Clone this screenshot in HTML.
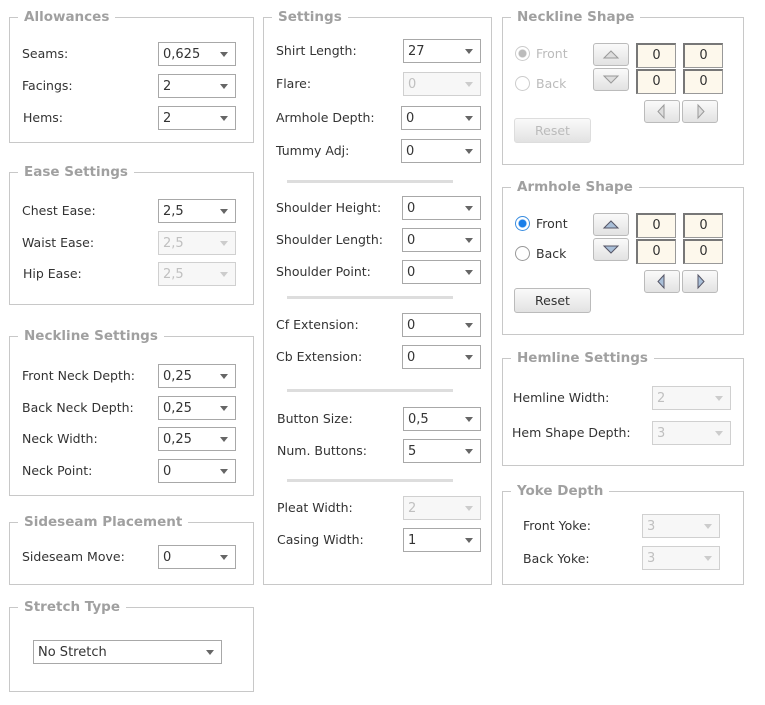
<!DOCTYPE html><html><head><style>
body{margin:0;width:765px;height:705px;background:#fff;font-family:"DejaVu Sans",Verdana,sans-serif;font-size:12.5px;color:#333;position:relative;overflow:hidden}
div,span{position:absolute;box-sizing:border-box}
.b{border:1px solid #c8c8c8}
.lg{top:-10px;left:8px;background:#fff;padding:0 6px;color:#a0a0a0;font-weight:bold;font-size:13.5px;line-height:18px;white-space:nowrap}
.l{white-space:nowrap;line-height:16px}
.s{border:1px solid #a8a8a8;height:24px;line-height:22px;padding-left:4px;padding-top:1px;background:#fff;font-size:13px}
.s:after{content:"";position:absolute;right:7px;top:9px;border-left:4px solid transparent;border-right:4px solid transparent;border-top:5px solid #666}
.d{border-color:#d0d0d0;color:#c0c0c0;background:#f7f7f7}
.d:after{border-top-color:#ccc}
.sep{height:3px;background:#ddd;left:287px;width:166px}
.btn{border:1px solid #bbb;border-radius:3px;background:linear-gradient(#fafafa,#e2e2e2)}
.inp{border:1px solid #999;border-top:2px solid #777;border-left:2px solid #777;background:#fdf8ec;text-align:center;line-height:21px;font-size:13px}
.r{width:15px;height:15px;border-radius:50%;border:1px solid #999;background:#fff}
</style></head><body>

<div class="b" style="left:9px;top:17px;width:245px;height:126px"><span class="lg">Allowances</span></div>
<div class="l" style="left:22px;top:46px">Seams:</div><div class="s" style="left:158px;top:42px;width:78px">0,625</div>
<div class="l" style="left:22px;top:78px">Facings:</div><div class="s" style="left:158px;top:74px;width:78px">2</div>
<div class="l" style="left:23px;top:110px">Hems:</div><div class="s" style="left:158px;top:106px;width:78px">2</div>

<div class="b" style="left:9px;top:172px;width:245px;height:133px"><span class="lg">Ease Settings</span></div>
<div class="l" style="left:22px;top:203px">Chest Ease:</div><div class="s" style="left:158px;top:199px;width:78px">2,5</div>
<div class="l" style="left:22px;top:235px">Waist Ease:</div><div class="s d" style="left:158px;top:231px;width:78px">2,5</div>
<div class="l" style="left:23px;top:266px">Hip Ease:</div><div class="s d" style="left:158px;top:262px;width:78px">2,5</div>

<div class="b" style="left:9px;top:336px;width:245px;height:160px"><span class="lg">Neckline Settings</span></div>
<div class="l" style="left:22px;top:368px">Front Neck Depth:</div><div class="s" style="left:158px;top:364px;width:78px">0,25</div>
<div class="l" style="left:22px;top:400px">Back Neck Depth:</div><div class="s" style="left:158px;top:396px;width:78px">0,25</div>
<div class="l" style="left:22px;top:431px">Neck Width:</div><div class="s" style="left:158px;top:427px;width:78px">0,25</div>
<div class="l" style="left:22px;top:463px">Neck Point:</div><div class="s" style="left:158px;top:459px;width:78px">0</div>

<div class="b" style="left:9px;top:522px;width:245px;height:63px"><span class="lg">Sideseam Placement</span></div>
<div class="l" style="left:22px;top:549px">Sideseam Move:</div><div class="s" style="left:158px;top:545px;width:78px">0</div>

<div class="b" style="left:9px;top:607px;width:245px;height:85px"><span class="lg">Stretch Type</span></div>
<div class="s" style="left:33px;top:640px;width:189px">No Stretch</div>

<div class="b" style="left:263px;top:17px;width:229px;height:568px"><span class="lg">Settings</span></div>
<div class="l" style="left:276px;top:43px">Shirt Length:</div><div class="s" style="left:403px;top:39px;width:78px">27</div>
<div class="l" style="left:276px;top:76px">Flare:</div><div class="s d" style="left:403px;top:72px;width:78px">0</div>
<div class="l" style="left:276px;top:110px">Armhole Depth:</div><div class="s" style="left:401px;top:106px;width:80px">0</div>
<div class="l" style="left:276px;top:143px">Tummy Adj:</div><div class="s" style="left:401px;top:139px;width:80px">0</div>
<div class="sep" style="top:180px"></div>
<div class="l" style="left:276px;top:200px">Shoulder Height:</div><div class="s" style="left:402px;top:196px;width:79px">0</div>
<div class="l" style="left:276px;top:232px">Shoulder Length:</div><div class="s" style="left:402px;top:228px;width:79px">0</div>
<div class="l" style="left:276px;top:264px">Shoulder Point:</div><div class="s" style="left:402px;top:260px;width:79px">0</div>
<div class="sep" style="top:296px"></div>
<div class="l" style="left:276px;top:317px">Cf Extension:</div><div class="s" style="left:402px;top:313px;width:79px">0</div>
<div class="l" style="left:276px;top:349px">Cb Extension:</div><div class="s" style="left:402px;top:345px;width:79px">0</div>
<div class="sep" style="top:389px"></div>
<div class="l" style="left:277px;top:411px">Button Size:</div><div class="s" style="left:403px;top:407px;width:78px">0,5</div>
<div class="l" style="left:277px;top:443px">Num. Buttons:</div><div class="s" style="left:403px;top:439px;width:78px">5</div>
<div class="sep" style="top:479px"></div>
<div class="l" style="left:277px;top:500px">Pleat Width:</div><div class="s d" style="left:403px;top:496px;width:78px">2</div>
<div class="l" style="left:277px;top:532px">Casing Width:</div><div class="s" style="left:403px;top:528px;width:78px">1</div>

<div class="b" style="left:502px;top:17px;width:242px;height:148px"><span class="lg">Neckline Shape</span></div>
<div class="r" style="left:515px;top:46px;border-color:#ccc;background:radial-gradient(#bbb 3.5px,#fff 4.5px)"></div><div class="l" style="left:536px;top:46px;color:#bbb">Front</div>
<div class="r" style="left:515px;top:76px;border-color:#ccc"></div><div class="l" style="left:536px;top:76px;color:#bbb">Back</div>
<div class="btn" style="left:593px;top:43px;width:36px;height:23px"><svg width="34" height="21"><path d="M10 14 L17 7 L24 14 Z" fill="#ddd" stroke="#999"/></svg></div>
<div class="btn" style="left:593px;top:68px;width:36px;height:23px"><svg width="34" height="21"><path d="M10 7 L17 14 L24 7 Z" fill="#ddd" stroke="#999"/></svg></div>
<div class="inp" style="left:636px;top:43px;width:40px;height:25px">0</div><div class="inp" style="left:683px;top:43px;width:40px;height:25px">0</div>
<div class="inp" style="left:636px;top:69px;width:40px;height:25px">0</div><div class="inp" style="left:683px;top:69px;width:40px;height:25px">0</div>
<div class="btn" style="left:644px;top:100px;width:36px;height:23px"><svg width="34" height="21"><path d="M19 4 L13 10.5 L19 17 Z" fill="#ddd" stroke="#999"/></svg></div>
<div class="btn" style="left:682px;top:100px;width:36px;height:23px"><svg width="34" height="21"><path d="M15 4 L21 10.5 L15 17 Z" fill="#ddd" stroke="#999"/></svg></div>
<div class="btn" style="left:514px;top:118px;width:77px;height:25px;text-align:center;line-height:23px;color:#bbb;border-color:#ddd">Reset</div>

<div class="b" style="left:502px;top:187px;width:242px;height:148px"><span class="lg">Armhole Shape</span></div>
<div class="r" style="left:515px;top:216px;border-color:#3a8de0;background:radial-gradient(#1a7ee8 3.5px,#fff 4.5px)"></div><div class="l" style="left:536px;top:216px">Front</div>
<div class="r" style="left:515px;top:246px"></div><div class="l" style="left:536px;top:246px">Back</div>
<div class="btn" style="left:593px;top:213px;width:36px;height:23px"><svg width="34" height="21"><path d="M10 14 L17 7 L24 14 Z" fill="#a9bfd8" stroke="#556"/></svg></div>
<div class="btn" style="left:593px;top:238px;width:36px;height:23px"><svg width="34" height="21"><path d="M10 7 L17 14 L24 7 Z" fill="#a9bfd8" stroke="#556"/></svg></div>
<div class="inp" style="left:636px;top:213px;width:40px;height:25px">0</div><div class="inp" style="left:683px;top:213px;width:40px;height:25px">0</div>
<div class="inp" style="left:636px;top:239px;width:40px;height:25px">0</div><div class="inp" style="left:683px;top:239px;width:40px;height:25px">0</div>
<div class="btn" style="left:644px;top:270px;width:36px;height:23px"><svg width="34" height="21"><path d="M19 4 L13 10.5 L19 17 Z" fill="#a9bfd8" stroke="#556"/></svg></div>
<div class="btn" style="left:682px;top:270px;width:36px;height:23px"><svg width="34" height="21"><path d="M15 4 L21 10.5 L15 17 Z" fill="#a9bfd8" stroke="#556"/></svg></div>
<div class="btn" style="left:514px;top:288px;width:77px;height:25px;text-align:center;line-height:23px">Reset</div>

<div class="b" style="left:502px;top:358px;width:242px;height:108px"><span class="lg">Hemline Settings</span></div>
<div class="l" style="left:513px;top:390px">Hemline Width:</div><div class="s d" style="left:652px;top:386px;width:79px">2</div>
<div class="l" style="left:512px;top:425px">Hem Shape Depth:</div><div class="s d" style="left:652px;top:421px;width:79px">3</div>

<div class="b" style="left:502px;top:491px;width:242px;height:94px"><span class="lg">Yoke Depth</span></div>
<div class="l" style="left:523px;top:518px">Front Yoke:</div><div class="s d" style="left:642px;top:514px;width:78px">3</div>
<div class="l" style="left:523px;top:551px">Back Yoke:</div><div class="s d" style="left:642px;top:546px;width:78px">3</div>
</body></html>
